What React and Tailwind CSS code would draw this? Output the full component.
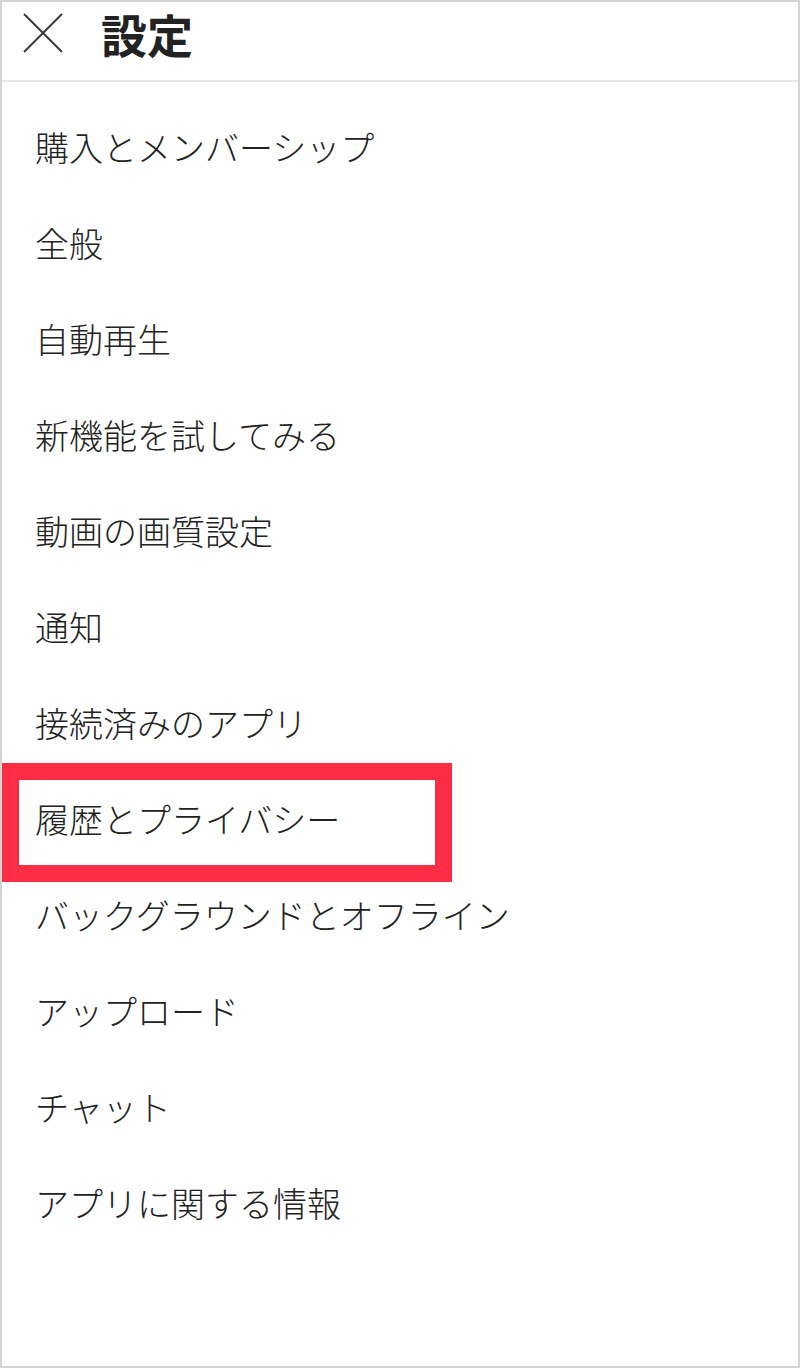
import React from "react";

const items = [
  "購入とメンバーシップ",
  "全般",
  "自動再生",
  "新機能を試してみる",
  "動画の画質設定",
  "通知",
  "接続済みのアプリ",
  "履歴とプライバシー",
  "バックグラウンドとオフライン",
  "アップロード",
  "チャット",
  "アプリに関する情報",
];

export default function App() {
  return (
    <div
      className="w-[800px] h-[1368px] bg-white border-2 border-[#d4d4d4] overflow-hidden flex flex-col"
      style={{ fontFamily: '"Noto Sans CJK JP", "Noto Sans", sans-serif' }}
    >
      <div className="h-[80px] flex items-start border-b-2 border-[#e6e6e6] shrink-0">
        <svg
          className="ml-[20px] mt-[10px]"
          width="42"
          height="42"
          viewBox="0 0 42 42"
          fill="none"
          stroke="#3a3a3a"
          strokeWidth="2"
        >
          <path d="M2 2 L40 40 M40 2 L2 40" />
        </svg>
        <div className="ml-[37px] mt-[8px] text-[46px] font-bold text-[#222] leading-none">
          設定
        </div>
      </div>
      <div className="pt-[17px] flex flex-col">
        {items.map((t, i) => (
          <div key={i} className="relative h-[96px] flex items-center pl-[33px]">
            <span className="text-[34px] text-[#222] font-light leading-none">
              {t}
            </span>
            {i === 7 && (
              <div className="absolute left-0 top-[-8px] w-[450px] h-[119px] border-[17px] border-[#fd2d45]" />
            )}
          </div>
        ))}
      </div>
    </div>
  );
}
